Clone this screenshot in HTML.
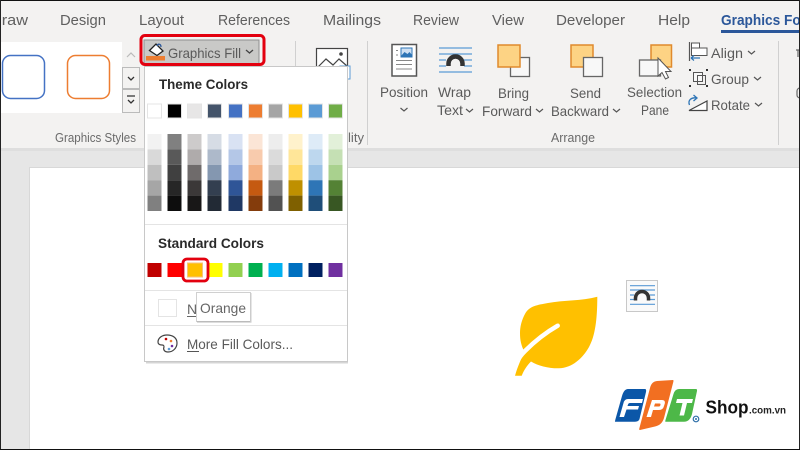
<!DOCTYPE html>
<html><head><meta charset="utf-8">
<style>
html,body{margin:0;padding:0;width:800px;height:450px;overflow:hidden;background:#fff}
svg{display:block}
text{font-family:"Liberation Sans",sans-serif;fill:#5a5a5a}
.t{font-size:15px;fill:#5f5f5f}
.r{font-size:14px;fill:#5a5a5a}
.g{font-size:12.500px;fill:#6a6a6a}
.h{font-size:14px;font-weight:bold;fill:#2a2a2a}
</style></head><body>
<svg width="800" height="450" viewBox="0 0 800 450" xmlns="http://www.w3.org/2000/svg">
<rect width="800" height="450" fill="#e6e6e6"/>
<rect width="800" height="148" fill="#f3f2f1"/>
<rect y="148" width="800" height="3" fill="#dedede"/>
<rect x="30" y="168" width="770" height="282" fill="#fff"/>
<rect x="29.500" y="167.500" width="771" height="283" fill="none" stroke="#d8d8d8"/>
<!-- tabs -->
<text class="t" x="-10" y="25" textLength="38" lengthAdjust="spacingAndGlyphs">Draw</text>
<text class="t" x="60" y="25" textLength="46" lengthAdjust="spacingAndGlyphs">Design</text>
<text class="t" x="139" y="25" textLength="45" lengthAdjust="spacingAndGlyphs">Layout</text>
<text class="t" x="218" y="25" textLength="72" lengthAdjust="spacingAndGlyphs">References</text>
<text class="t" x="323" y="25" textLength="58" lengthAdjust="spacingAndGlyphs">Mailings</text>
<text class="t" x="413" y="25" textLength="46" lengthAdjust="spacingAndGlyphs">Review</text>
<text class="t" x="492" y="25" textLength="32" lengthAdjust="spacingAndGlyphs">View</text>
<text class="t" x="556" y="25" textLength="69" lengthAdjust="spacingAndGlyphs">Developer</text>
<text class="t" x="658" y="25" textLength="32" lengthAdjust="spacingAndGlyphs">Help</text>
<text x="721" y="25" font-size="15" font-weight="bold" style="fill:#2b579a" textLength="85" lengthAdjust="spacingAndGlyphs">Graphics For</text>
<rect x="721" y="30" width="79" height="3" fill="#2b579a"/>
<!-- styles gallery -->
<rect x="0" y="42" width="122" height="71" fill="#fff"/>
<rect x="2.500" y="55.500" width="42" height="43" rx="8" fill="#fff" stroke="#4472c4" stroke-width="1.500"/>
<rect x="67.500" y="55.500" width="42" height="43" rx="8" fill="#fff" stroke="#ed7d31" stroke-width="1.500"/>
<path d="M127 57l4-4 4 4" fill="none" stroke="#bbb" stroke-width="1.200"/>
<rect x="122.500" y="67.500" width="17" height="21" fill="#f3f2f1" stroke="#bbb"/>
<path d="M128 77l3 3 3-3" fill="none" stroke="#333" stroke-width="1.300"/>
<rect x="122.500" y="89.500" width="17" height="23" fill="#f3f2f1" stroke="#bbb"/>
<path d="M127 96h8M128 100l3 3 3-3" fill="none" stroke="#333" stroke-width="1.300"/>
<text class="g" x="55" y="142" textLength="81" lengthAdjust="spacingAndGlyphs">Graphics Styles</text>
<!-- graphics fill button -->
<rect x="144" y="40" width="115" height="24" fill="#c9c9c7" stroke="#8f8f8f"/>
<path d="M149.500 50.500l6.500-6.500 7 7-6 4.500z" fill="#fff" stroke="#222" stroke-width="1.300"/>
<path d="M157 46c1-3 4-2 4 1" fill="none" stroke="#2b579a" stroke-width="1.300"/>
<rect x="146" y="56" width="19" height="4.500" fill="#ed7d31"/>
<text x="168" y="58" font-size="14" style="fill:#5a5a5a" textLength="73" lengthAdjust="spacingAndGlyphs">Graphics Fill</text>
<path d="M246 50l3.500 3 3.500-3" fill="none" stroke="#444" stroke-width="1.300"/>
<rect x="141" y="35.500" width="123" height="29" rx="4" fill="none" stroke="#e3000f" stroke-width="3"/>
<line x1="295.500" y1="41" x2="295.500" y2="145" stroke="#d0d0d0"/>
<!-- alt-text icon -->
<rect x="316.500" y="48.500" width="31" height="26" fill="#fff" stroke="#444" stroke-width="1.200"/>
<path d="M317 68l9-9 7 6 6-6 8 7" fill="none" stroke="#444" stroke-width="1.200"/>
<circle cx="341" cy="54" r="1.800" fill="#444"/>
<rect x="340" y="66" width="10" height="13" fill="#fff" stroke="#5b9bd5"/>
<text class="g" x="348" y="142" textLength="16" lengthAdjust="spacingAndGlyphs">lity</text>
<line x1="367.500" y1="41" x2="367.500" y2="145" stroke="#d0d0d0"/>
<!-- position -->
<rect x="392" y="44.500" width="24.500" height="31.500" fill="#fff" stroke="#555" stroke-width="1.500"/>
<rect x="401" y="48" width="11" height="9" fill="#cfe0f2" stroke="#2e75b6"/>
<path d="M401 56l3.500-4 3 2 2-2 2.500 3v2h-11z" fill="#2e75b6"/>
<path d="M396 50.500h2M396 55h2M396 60.500h16M396 64.500h16M396 69h16" stroke="#888" stroke-width="1"/>
<text class="r" x="380" y="97" textLength="48" lengthAdjust="spacingAndGlyphs">Position</text>
<path d="M400.500 108l3.500 3 3.500-3" fill="none" stroke="#555" stroke-width="1.200"/>
<!-- wrap -->
<path d="M439 48h33M439 54h33M439 60h7M464 60h8M439 66h7M464 66h8M439 72h33" stroke="#5b9bd5" stroke-width="1.300" fill="none"/>
<path d="M448.500 66v-2.500a7 7 0 0 1 14 0v2.500" fill="#f3f2f1" stroke="#333" stroke-width="4.500"/>
<text class="r" x="438" y="97" textLength="33" lengthAdjust="spacingAndGlyphs">Wrap</text>
<text class="r" x="437" y="115" textLength="26" lengthAdjust="spacingAndGlyphs">Text</text>
<path d="M466 109l3.500 3 3.500-3" fill="none" stroke="#555" stroke-width="1.200"/>
<!-- bring forward -->
<rect x="510.500" y="57.500" width="19" height="19" fill="#f8f8f8" stroke="#666" stroke-width="1.300"/>
<rect x="498" y="45" width="22" height="22" fill="#fdd384" stroke="#e08a2d" stroke-width="1.500"/>
<text class="r" x="498" y="98" textLength="31" lengthAdjust="spacingAndGlyphs">Bring</text>
<text class="r" x="482" y="116" textLength="50" lengthAdjust="spacingAndGlyphs">Forward</text>
<path d="M536 109l3.500 3 3.500-3" fill="none" stroke="#555" stroke-width="1.200"/>
<!-- send backward -->
<rect x="571" y="45" width="22" height="22" fill="#fdd384" stroke="#e08a2d" stroke-width="1.500"/>
<rect x="583.500" y="57.500" width="19" height="19" fill="#f8f8f8" stroke="#666" stroke-width="1.300"/>
<text class="r" x="570" y="98" textLength="31" lengthAdjust="spacingAndGlyphs">Send</text>
<text class="r" x="551" y="116" textLength="58" lengthAdjust="spacingAndGlyphs">Backward</text>
<path d="M613 109l3.500 3 3.500-3" fill="none" stroke="#555" stroke-width="1.200"/>
<!-- selection pane -->
<rect x="651" y="45" width="20.500" height="22" fill="#fdd384" stroke="#e08a2d" stroke-width="1.500"/>
<rect x="639.500" y="60" width="21" height="16" fill="#f8f8f8" stroke="#666" stroke-width="1.300"/>
<path d="M658 58v18l4-3.500 3.500 6.500 3-1.500-3-6h5.500z" fill="#fff" stroke="#555" stroke-width="1"/>
<text class="r" x="627" y="97" textLength="55" lengthAdjust="spacingAndGlyphs">Selection</text>
<text class="r" x="641" y="115" textLength="28" lengthAdjust="spacingAndGlyphs">Pane</text>
<!-- align group rotate -->
<path d="M689.500 42v19" stroke="#555" stroke-width="1.200"/>
<rect x="691.500" y="43" width="8" height="5" fill="#fff" stroke="#555"/>
<rect x="691.500" y="48" width="15.500" height="7.500" fill="#fff" stroke="#555"/>
<path d="M691 58h9M691 58l3-2.500M691 58l3 2.500" stroke="#2e75b6" fill="none" stroke-width="1.200"/>
<text class="r" x="711" y="58" textLength="32" lengthAdjust="spacingAndGlyphs">Align</text>
<path d="M748 51l3.500 3 3.500-3" fill="none" stroke="#555" stroke-width="1.200"/>
<rect x="693.500" y="72.500" width="9" height="9" fill="#f8f8f8" stroke="#555"/>
<rect x="697.500" y="75.500" width="8" height="9" fill="none" stroke="#555"/>
<path d="M689 69h2v2h-2zM706 69h2v2h-2zM689 85h2v2h-2zM706 85h2v2h-2z" fill="#333"/>
<text class="r" x="711" y="84" textLength="38" lengthAdjust="spacingAndGlyphs">Group</text>
<path d="M754 77l3.500 3 3.500-3" fill="none" stroke="#555" stroke-width="1.200"/>
<path d="M689 110.500l18-9.500v9.500z" fill="#fff" stroke="#444" stroke-width="1.200"/>
<path d="M689.500 105c-2-5 2-8 7.500-7M693.500 95l3.500 3-3.500 3" fill="none" stroke="#2e75b6" stroke-width="1.300"/>
<text class="r" x="711" y="110" textLength="39" lengthAdjust="spacingAndGlyphs">Rotate</text>
<path d="M755 103l3.500 3 3.500-3" fill="none" stroke="#555" stroke-width="1.200"/>
<text class="g" x="551" y="142" textLength="44" lengthAdjust="spacingAndGlyphs">Arrange</text>
<line x1="778.500" y1="41" x2="778.500" y2="145" stroke="#d0d0d0"/>
<path d="M796 50h4M798 50v7" stroke="#666" stroke-width="1.200"/>
<path d="M800 88a3 3 0 0 0-3 3v4a3 3 0 0 0 3 3" stroke="#666" fill="none" stroke-width="1.200"/>
<!-- menu -->
<rect x="144.500" y="66.500" width="203" height="295" fill="#fff" stroke="#c8c8c8"/>
<rect x="146" y="362" width="202" height="1.500" fill="#d5d5d5"/>
<text class="h" x="159" y="89" textLength="89" lengthAdjust="spacingAndGlyphs">Theme Colors</text>
<g stroke="#e4e4e4" stroke-width="1">
<rect x="147.500" y="104" width="14" height="14" fill="#fff"/>
<rect x="167.500" y="104" width="14" height="14" fill="#000"/>
<rect x="187.500" y="104" width="14" height="14" fill="#e7e6e6"/>
<rect x="207.500" y="104" width="14" height="14" fill="#44546a"/>
<rect x="228.500" y="104" width="14" height="14" fill="#4472c4"/>
<rect x="248.500" y="104" width="14" height="14" fill="#ed7d31"/>
<rect x="268.500" y="104" width="14" height="14" fill="#a5a5a5"/>
<rect x="288.500" y="104" width="14" height="14" fill="#ffc000"/>
<rect x="308.500" y="104" width="14" height="14" fill="#5b9bd5"/>
<rect x="328.500" y="104" width="14" height="14" fill="#70ad47"/>
</g>
<g>
<rect x="147.500" y="134" width="14" height="15.400" fill="#f2f2f2"/><rect x="147.500" y="149.400" width="14" height="15.400" fill="#d9d9d9"/><rect x="147.500" y="164.800" width="14" height="15.400" fill="#bfbfbf"/><rect x="147.500" y="180.200" width="14" height="15.400" fill="#a6a6a6"/><rect x="147.500" y="195.600" width="14" height="15.400" fill="#808080"/>
<rect x="167.500" y="134" width="14" height="15.400" fill="#808080"/><rect x="167.500" y="149.400" width="14" height="15.400" fill="#595959"/><rect x="167.500" y="164.800" width="14" height="15.400" fill="#404040"/><rect x="167.500" y="180.200" width="14" height="15.400" fill="#262626"/><rect x="167.500" y="195.600" width="14" height="15.400" fill="#0d0d0d"/>
<rect x="187.500" y="134" width="14" height="15.400" fill="#cdcbcb"/><rect x="187.500" y="149.400" width="14" height="15.400" fill="#afabab"/><rect x="187.500" y="164.800" width="14" height="15.400" fill="#6f6b6b"/><rect x="187.500" y="180.200" width="14" height="15.400" fill="#3b3838"/><rect x="187.500" y="195.600" width="14" height="15.400" fill="#181717"/>
<rect x="207.500" y="134" width="14" height="15.400" fill="#d6dce5"/><rect x="207.500" y="149.400" width="14" height="15.400" fill="#adb9ca"/><rect x="207.500" y="164.800" width="14" height="15.400" fill="#8497b0"/><rect x="207.500" y="180.200" width="14" height="15.400" fill="#333f50"/><rect x="207.500" y="195.600" width="14" height="15.400" fill="#222a35"/>
<rect x="228.500" y="134" width="14" height="15.400" fill="#d9e2f3"/><rect x="228.500" y="149.400" width="14" height="15.400" fill="#b4c7e7"/><rect x="228.500" y="164.800" width="14" height="15.400" fill="#8faadc"/><rect x="228.500" y="180.200" width="14" height="15.400" fill="#2f5597"/><rect x="228.500" y="195.600" width="14" height="15.400" fill="#1f3864"/>
<rect x="248.500" y="134" width="14" height="15.400" fill="#fbe5d6"/><rect x="248.500" y="149.400" width="14" height="15.400" fill="#f8cbad"/><rect x="248.500" y="164.800" width="14" height="15.400" fill="#f4b183"/><rect x="248.500" y="180.200" width="14" height="15.400" fill="#c55a11"/><rect x="248.500" y="195.600" width="14" height="15.400" fill="#843c0c"/>
<rect x="268.500" y="134" width="14" height="15.400" fill="#ededed"/><rect x="268.500" y="149.400" width="14" height="15.400" fill="#dbdbdb"/><rect x="268.500" y="164.800" width="14" height="15.400" fill="#c9c9c9"/><rect x="268.500" y="180.200" width="14" height="15.400" fill="#7b7b7b"/><rect x="268.500" y="195.600" width="14" height="15.400" fill="#525252"/>
<rect x="288.500" y="134" width="14" height="15.400" fill="#fff2cc"/><rect x="288.500" y="149.400" width="14" height="15.400" fill="#ffe699"/><rect x="288.500" y="164.800" width="14" height="15.400" fill="#ffd966"/><rect x="288.500" y="180.200" width="14" height="15.400" fill="#bf9000"/><rect x="288.500" y="195.600" width="14" height="15.400" fill="#7f6000"/>
<rect x="308.500" y="134" width="14" height="15.400" fill="#deebf7"/><rect x="308.500" y="149.400" width="14" height="15.400" fill="#bdd7ee"/><rect x="308.500" y="164.800" width="14" height="15.400" fill="#9dc3e6"/><rect x="308.500" y="180.200" width="14" height="15.400" fill="#2e75b6"/><rect x="308.500" y="195.600" width="14" height="15.400" fill="#1f4e79"/>
<rect x="328.500" y="134" width="14" height="15.400" fill="#e2f0d9"/><rect x="328.500" y="149.400" width="14" height="15.400" fill="#c5e0b4"/><rect x="328.500" y="164.800" width="14" height="15.400" fill="#a9d18e"/><rect x="328.500" y="180.200" width="14" height="15.400" fill="#548235"/><rect x="328.500" y="195.600" width="14" height="15.400" fill="#385723"/>
</g>
<line x1="145" y1="224.500" x2="347" y2="224.500" stroke="#e4e4e4"/>
<text class="h" x="158" y="248" textLength="106" lengthAdjust="spacingAndGlyphs">Standard Colors</text>
<rect x="147.500" y="263" width="14" height="14" fill="#c00000"/>
<rect x="167.500" y="263" width="20" height="14" fill="#ff0000"/>
<rect x="208" y="263" width="14.500" height="14" fill="#ffff00"/>
<rect x="228.500" y="263" width="14" height="14" fill="#92d050"/>
<rect x="248.500" y="263" width="14" height="14" fill="#00b050"/>
<rect x="268.500" y="263" width="14" height="14" fill="#00b0f0"/>
<rect x="288.500" y="263" width="14" height="14" fill="#0070c0"/>
<rect x="308.500" y="263" width="14" height="14" fill="#002060"/>
<rect x="328.500" y="263" width="14" height="14" fill="#7030a0"/>
<rect x="183" y="259" width="25" height="22" rx="4" fill="#fff" stroke="#e3000f" stroke-width="2.800"/>
<rect x="187.500" y="263" width="15" height="14" fill="#ffc000" stroke="#f7c27a"/>
<line x1="145" y1="290.500" x2="347" y2="290.500" stroke="#e4e4e4"/>
<rect x="158.500" y="299.500" width="18" height="17" fill="#fff" stroke="#e4e4e4"/>
<text x="187" y="314" font-size="14" style="fill:#666">N</text>
<line x1="187" y1="316.500" x2="196" y2="316.500" stroke="#666"/>
<line x1="145" y1="325.500" x2="347" y2="325.500" stroke="#e4e4e4"/>
<rect x="196.500" y="292.500" width="54" height="29" fill="#fff" stroke="#d0d0d0"/>
<rect x="197" y="321" width="54.500" height="1.500" fill="#bbb"/>
<rect x="250" y="293" width="1.500" height="29" fill="#ccc"/>
<text x="200" y="313" font-size="14" style="fill:#666" textLength="46" lengthAdjust="spacingAndGlyphs">Orange</text>
<!-- palette -->
<path d="M167 335c-5 0-9 3-9 7 0 3 3 3 4 3 2 0 2 1 2 2-1 2 0 5 4 5 5 0 9-4 9-9 0-5-4-8-10-8z" fill="#fff" stroke="#444" stroke-width="1.200"/>
<circle cx="166" cy="339" r="1.300" fill="#c00000"/><circle cx="171" cy="341" r="1.300" fill="#ed7d31"/><circle cx="172" cy="346" r="1.300" fill="#7030a0"/><circle cx="169" cy="349" r="1.300" fill="#5b9bd5"/>
<text x="187" y="349" font-size="14" style="fill:#5a5a5a" textLength="106" lengthAdjust="spacingAndGlyphs">More Fill Colors...</text>
<line x1="187" y1="351.500" x2="199" y2="351.500" stroke="#555"/>
<!-- leaf -->
<path d="M597.300 296.700C582 301 563 300 548 303C537 305 530 306 525.500 313C521.500 320 520 327 520 333C520 340 521 345 524.500 352C521 359 517.500 367 515 375.700H521.700C524 370 527 365.500 531 361.500C538 366 549 368.500 559 368.300C572 368 583 358 589 347C595 336 597.300 320 597.300 296.700Z" fill="#ffc000"/>
<path d="M557.700 325.700C545 333 533 343 525 351C522 354 519.500 357 518 360" fill="none" stroke="#fff" stroke-width="4.500" stroke-linecap="round"/>
<!-- floating layout icon -->
<rect x="626.500" y="280.500" width="31" height="31" fill="#fafafa" stroke="#c8c8c8"/>
<path d="M630 285.700h25M630 290h25M630 295h4M650 295h5M630 299.500h4M650 299.500h5M630 304.300h25" stroke="#5b9bd5" stroke-width="1.200" fill="none"/>
<path d="M635.500 300.500v-2.500a6 6 0 0 1 13 0v2.500" fill="#fafafa" stroke="#333" stroke-width="3.500"/>
<!-- FPT logo -->
<path d="M628 389H645Q646.500 389 646 392L639.500 419Q638.800 421.700 635 421.700H615Q614.800 421.700 615.500 419L622 396Q624 389 628 389Z" fill="#0b57a8"/>
<path d="M657 381L673 380Q673.800 380 673.300 382L664 418Q662 425 655 426.500L640 430Q639 430.300 639.300 428.500L650 388Q651.500 381.500 657 381Z" fill="#f26f21"/>
<path d="M679 389H696Q697.300 389 697 391L692 414Q690 421.700 684 421.700H665.500Q665 421.700 665.500 420L673.500 394Q675 389 679 389Z" fill="#4db848"/>
<path d="M628 399H643L642 403H630Q628.500 403 628 404.500L627.500 406H639L638 409.500H626.500L624 417H619.500L623.500 403Q624.500 399 628 399Z" fill="#fff"/>
<path d="M652 400H662Q665.500 400 664.800 403.500L664 406Q663 410 659 410H653L651 417H646.500ZM655 403.500L654 406.500H659Q660 406.500 660.300 405.500L660.500 404.500Q660.700 403.500 659.500 403.500Z" fill="#fff" fill-rule="evenodd"/>
<path d="M677 399H693L692 403H687L684 415.500H679.500L682.500 403H676Z" fill="#fff"/>
<circle cx="696" cy="419" r="2.800" fill="#fff" stroke="#2e6fa8" stroke-width="1.200"/>
<circle cx="696" cy="419" r="1" fill="#2e6fa8"/>
<text x="705.500" y="413.500" font-size="18" font-weight="bold" style="fill:#111" textLength="43" lengthAdjust="spacingAndGlyphs">Shop</text>
<text x="749" y="413.500" font-size="10.500" font-weight="bold" style="fill:#222" textLength="37" lengthAdjust="spacingAndGlyphs">.com.vn</text>
<!-- frame -->
<rect x="0" y="0" width="800" height="1" fill="#111"/>
<rect x="0" y="0" width="1" height="450" fill="#222"/>
<rect x="799" y="0" width="1" height="450" fill="#222"/>
<rect x="0" y="449" width="800" height="1" fill="#111"/>
</svg>
</body></html>
